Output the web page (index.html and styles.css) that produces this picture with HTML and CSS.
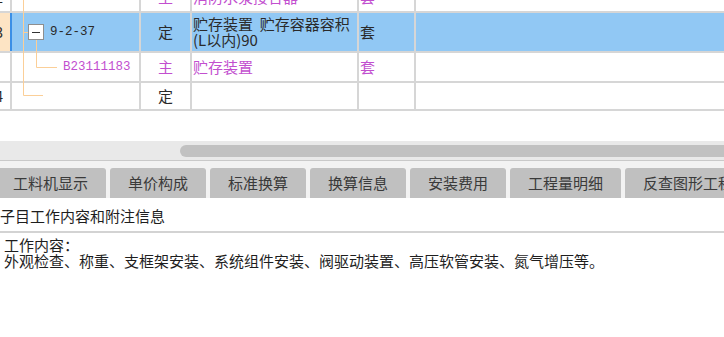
FILE: index.html
```html
<!DOCTYPE html>
<html lang="zh-CN">
<head>
<meta charset="utf-8">
<title>定额</title>
<link rel="stylesheet" href="styles.css">
</head>
<body>
<div class="grid">
  <div class="rows">
    <div class="row r1">
      <div class="cell rn"><span>2</span></div>
      <div class="cell code lvl2 sub">B23111180</div>
      <div class="cell type sub">主</div>
      <div class="cell desc sub">消防水泵接合器</div>
      <div class="cell unit sub">套</div>
      <div class="cell rest"></div>
    </div>
    <div class="row r2 selected">
      <div class="cell rn"><span>3</span></div>
      <div class="cell code lvl1">9-2-37</div>
      <div class="cell type">定</div>
      <div class="cell desc">贮存装置&nbsp;&nbsp;贮存容器容积(L以内)90</div>
      <div class="cell unit">套</div>
      <div class="cell rest"></div>
    </div>
    <div class="row r3">
      <div class="cell rn"><span></span></div>
      <div class="cell code lvl2 sub">B23111183</div>
      <div class="cell type sub">主</div>
      <div class="cell desc sub">贮存装置</div>
      <div class="cell unit sub">套</div>
      <div class="cell rest"></div>
    </div>
    <div class="row r4">
      <div class="cell rn"><span>4</span></div>
      <div class="cell code"></div>
      <div class="cell type">定</div>
      <div class="cell desc"></div>
      <div class="cell unit"></div>
      <div class="cell rest"></div>
    </div>
  </div>
  <svg class="tree" width="141" height="120" viewBox="0 0 141 120">
    <g stroke="#fbcf98" stroke-width="1" fill="none">
      <path d="M23.5 0V95.5H43"/>
      <path d="M23 32.5H28"/>
      <path d="M36.5 40V67.5H57"/>
    </g>
    <rect x="28.5" y="24.5" width="15" height="15" fill="#fff" stroke="#8e8e8e"/>
    <path d="M32 32.5H40" stroke="#333" stroke-width="1"/>
  </svg>
</div>
<div class="hscroll"><div class="thumb"></div></div>
<div class="tabbar">
  <div class="tab">工料机显示</div>
  <div class="tab">单价构成</div>
  <div class="tab">标准换算</div>
  <div class="tab">换算信息</div>
  <div class="tab">安装费用</div>
  <div class="tab">工程量明细</div>
  <div class="tab">反查图形工程量</div>
</div>
<div class="panel-title">子目工作内容和附注信息</div>
<div class="panel-body">
  <div class="line">工作内容：</div>
  <div class="line">外观检查、称重、支框架安装、系统组件安装、阀驱动装置、高压软管安装、氮气增压等。</div>
</div>
</body>
</html>
```
FILE: styles.css
```css
* { box-sizing: border-box; }
html, body { margin: 0; padding: 0; }
body {
  width: 724px;
  height: 337px;
  overflow: hidden;
  background: #fff;
  color: #2a2a2a;
  font-family: "Noto Sans CJK SC", "Noto Sans", sans-serif;
  font-size: 15px;
}
.grid {
  position: relative;
  height: 141px;
  overflow: hidden;
}
.rows { margin-top: -17px; }
.row {
  display: grid;
  grid-template-columns: 12px 129px 51px 167px 57px 1fr;
  border-bottom: 2px solid #d6d6d6;
}
.r1 { height: 30px; }
.r2 { height: 40px; }
.r3 { height: 30px; }
.r4 { height: 28px; }
.cell {
  border-right: 2px solid #d6d6d6;
  display: flex;
  align-items: center;
  overflow: hidden;
  white-space: nowrap;
  line-height: 16px;
}
.rest { border-right: none; }
.rn {
  justify-content: flex-end;
  padding-right: 7px;
  font-size: 14px;
}
.selected { background: #91c8f4; }
.selected .rn { background: #fde4c4; border-right-color: #3b8fe6; }
.code {
  font-family: "Liberation Mono", monospace;
  font-size: 12.5px;
}
.lvl1 { padding-left: 38px; }
.lvl2 { padding-left: 51px; }
.type { justify-content: center; }
.desc {
  padding-left: 1px;
  white-space: normal;
  line-height: 16px;
}
.unit { padding-left: 1px; }
.sub { color: #c24fcf; }
.tree {
  position: absolute;
  left: 0;
  top: 0;
  pointer-events: none;
}
.hscroll {
  height: 20px;
  background: #e9e9e9;
  border-bottom: 1px solid #c9c9c9;
  padding-top: 4px;
}
.thumb {
  margin-left: 180px;
  height: 12px;
  background: #c1c1c1;
  border-radius: 6px 0 0 6px;
}
.tabbar {
  display: flex;
  gap: 4px;
  padding-top: 7px;
  background: #f2f2f2;
  margin-left: -5px;
  width: 729px;
  white-space: nowrap;
  overflow: hidden;
}
.tab {
  flex: none;
  height: 30px;
  line-height: 30px;
  padding: 0 18px;
  background: #c0c0c0;
  border-radius: 3px 3px 0 0;
  color: #3a3a3a;
}
.panel-title {
  height: 35px;
  padding-top: 3px;
  line-height: 30px;
  border-bottom: 2px solid #d3d3d3;
  color: #1e1e1e;
}
.panel-body {
  padding: 4px 0 0 4px;
  color: #1e1e1e;
}
.line {
  line-height: 16px;
  height: 16px;
}
```
